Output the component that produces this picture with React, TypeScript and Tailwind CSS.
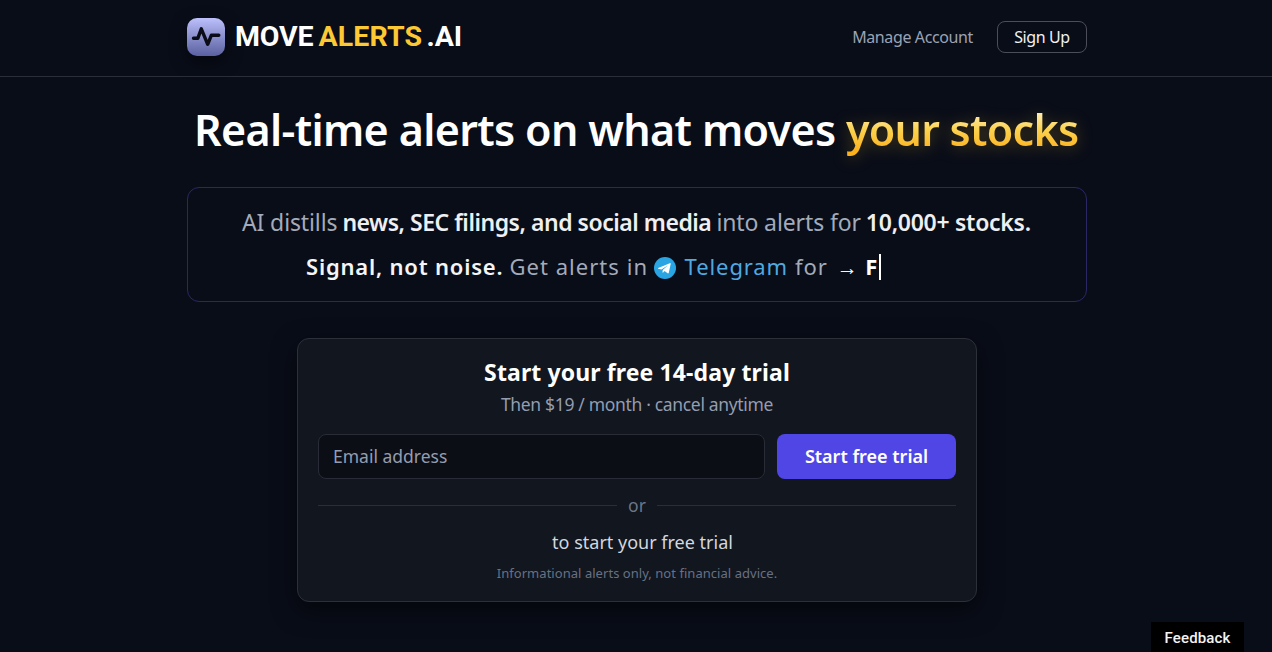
import React, { useState } from 'react';

const LogoIcon = () => (
  <div className="w-[38px] h-[38px] rounded-[10px] bg-gradient-to-b from-[#bcc0fb] to-[#5b60a0] shadow-[0_6px_16px_rgba(0,0,0,0.5)]">
    <svg viewBox="0 0 38 38" className="w-full h-full" fill="none">
      <path
        d="M6.5 20.3H10.8L14.3 10.8L20.7 26.3L24.3 17.3H31.8"
        stroke="#0a0d17"
        strokeWidth="3.4"
        strokeLinecap="round"
        strokeLinejoin="round"
      />
    </svg>
  </div>
);

const TelegramIcon = () => (
  <svg viewBox="0 0 24 24" className="w-[22px] h-[22px]">
    <circle cx="12" cy="12" r="12" fill="#29a5e3" />
    <path
      d="M4.6 12.1L17.2 6.7C17.9 6.4 18.4 6.8 18.2 7.6L16.1 17.3C15.9 18 15.4 18.1 14.8 17.8L11.6 15.4L10 16.9C9.7 17.2 9.3 17.1 9.3 16.6L9.5 14.2L15.3 8.9L8.1 13.5L4.7 12.8C4.2 12.6 4.2 12.3 4.6 12.1Z"
      fill="#fff"
    />
  </svg>
);

const App: React.FC = () => {
  const [email, setEmail] = useState('');

  return (
    <div className="min-h-screen overflow-hidden bg-[#090d18] font-['Noto_Sans',sans-serif] text-white">
      {/* Header */}
      <header className="h-[77px] border-b border-[#2b2e39] pl-[2px]">
        <div className="w-[900px] h-[74px] mx-auto flex items-center justify-between">
          <div className="flex items-center">
            <LogoIcon />
            <div className="ml-[10px] flex font-['Roboto',sans-serif] text-[28.5px] leading-[38px] font-bold">
              <span className="w-[79px] tracking-[-0.1px]">MOVE</span>
              <span className="ml-[4.5px] w-[103px] tracking-[0.1px] text-[#fcc934]">ALERTS</span>
              <span className="ml-[5px] tracking-[-0.1px]">.AI</span>
            </div>
          </div>
          <nav className="flex items-center gap-6">
            <a href="#" className="text-[16px] tracking-[-0.38px] text-[#9aa3b5]">Manage Account</a>
            <button className="w-[90px] h-8 rounded-lg border border-[#4b4e59] text-[16px] leading-none tracking-[-0.4px] text-[#f1f2f5]">
              Sign Up
            </button>
          </nav>
        </div>
      </header>

      <main className="w-[902px] mx-auto pl-[2px] pt-[28px]">
        <h1 className="flex pl-[7px] text-[43px] leading-[50px] font-[580] whitespace-nowrap">
          <span className="w-[643px] tracking-[-0.65px]">Real-time alerts on what moves</span>
          <span className="ml-[9px] pb-[4px] tracking-[-0.75px] bg-gradient-to-b from-[#fff0b8] from-10% via-[#fcd34d] via-45% to-[#fbb11a] to-85% bg-clip-text text-transparent [filter:drop-shadow(0_2px_8px_rgba(251,191,36,0.28))]">
            your stocks
          </span>
        </h1>

        {/* Tagline */}
        <section className="mt-[28px] h-[115px] rounded-xl border border-[#2b2765] pt-[12px] text-[#a3abbb] whitespace-nowrap">
          <p className="flex h-[45px] leading-[45px] pl-[54px] text-[23px]">
            <span className="tracking-[-0.12px]">AI distills</span>
            <strong className="ml-[5px] font-semibold tracking-[-0.47px] text-[#eeeff2]">
              news, SEC filings, and social media
            </strong>
            <span className="ml-[5px] tracking-[-0.12px]">into alerts for</span>
            <strong className="ml-[5px] font-semibold tracking-[-0.27px] text-[#eeeff2]">10,000+ stocks.</strong>
          </p>
          <p className="flex items-center h-[45px] leading-[43px] pl-[118px] text-[22px]">
            <strong className="h-[45px] font-semibold tracking-[0.8px] text-[#f4f5f7]">Signal, not noise.</strong>
            <span className="h-[45px] ml-[6px] tracking-[1.05px]">Get alerts in</span>
            <span className="ml-[6px]"><TelegramIcon /></span>
            <span className="h-[45px] ml-[8.5px] tracking-[0.9px] text-[#4fa9e2]">Telegram</span>
            <span className="h-[45px] ml-[7px] tracking-[0.9px]">for</span>
            <span className="ml-[9px] w-[28.5px] pb-px font-['Liberation_Sans',sans-serif] text-[21px] text-[#f4f5f7]">→</span>
            <span className="h-[45px] w-[14px] font-bold text-white">F</span>
            <span className="mb-px w-[2px] h-[26px] bg-white" />
          </p>
        </section>

        {/* Trial card */}
        <section className="mt-9 mx-auto w-[680px] h-[264px] rounded-xl border border-[#2c3039] bg-[#11161f] px-5 pt-[17px] text-center shadow-[0_8px_24px_rgba(0,0,0,0.55)]">
          <h2 className="text-[23px] leading-8 font-bold tracking-[0.12px]">Start your free 14-day trial</h2>
          <p className="mt-[2px] text-[17.5px] leading-7 tracking-[-0.33px] text-[#949db0]">
            Then $19 / month · cancel anytime
          </p>
          <form className="mt-4 flex gap-3" onSubmit={(e) => e.preventDefault()}>
            <input
              type="email"
              value={email}
              onChange={(e) => setEmail(e.target.value)}
              placeholder="Email address"
              className="w-[447px] h-[45px] rounded-lg border border-[#292c36] bg-[#0c0e16] pl-[14px] pr-[13px] pb-[2px] text-[17.5px] text-white placeholder:text-[#949db0] outline-none"
            />
            <button className="w-[179px] h-[45px] rounded-lg bg-[#4f46e5] pb-[2px] text-[18px] leading-none font-semibold">
              Start free trial
            </button>
          </form>
          <div className="mt-[14px] h-[25px] flex items-center gap-[11px] text-[17.5px] leading-[25px] text-[#6b7588]">
            <span className="flex-1 h-px bg-[#2a2e37]" />
            or
            <span className="flex-1 h-px bg-[#2a2e37]" />
          </div>
          <p className="mt-3 pl-[11px] text-[18px] leading-6 text-[#d3d7df]">to start your free trial</p>
          <p className="mt-[9px] text-[13px] leading-5 tracking-[0.04px] text-[#677184]">
            Informational alerts only, not financial advice.
          </p>
        </section>
      </main>

      <button className="fixed bottom-0 right-[28px] w-[93px] h-[30px] bg-black pt-px font-['Roboto',sans-serif] text-[15px] leading-[30px] font-medium tracking-[0.15px] text-[#f3f3f3]">
        Feedback
      </button>
    </div>
  );
};

export default App;
